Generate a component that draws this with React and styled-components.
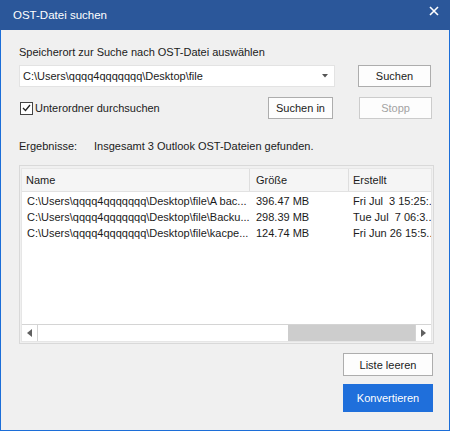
import React from "react";
import styled, { createGlobalStyle } from "styled-components";

const Global = createGlobalStyle`
  html, body { margin: 0; padding: 0; background: #f0f0f0; }
  * { box-sizing: border-box; }
  body { font-family: "Liberation Sans", Arial, sans-serif; font-size: 11px; color: #1b1b1b; }
`;

const Window = styled.div`
  width: 450px;
  height: 431px;
  display: flex;
  flex-direction: column;
  background: #f0f0f0;
  border: 1px solid #1c6ed8;
  border-top: none;
`;

const TitleBar = styled.div`
  height: 30px;
  margin: 0 -1px;
  background: #2b579a;
  color: #fff;
  display: flex;
  align-items: center;
  justify-content: space-between;
  padding: 0 12px 1px 13px;
  font-size: 11.5px;
`;

const CloseBtn = styled.div`
  width: 16px;
  height: 16px;
  display: flex;
  align-items: center;
  justify-content: center;
  margin-top: -7px;
  margin-right: -4px;
`;

const Body = styled.div`
  flex: 1;
  display: flex;
  flex-direction: column;
  padding: 0 17px 0 18px;
`;

const Label = styled.div`
  line-height: 16px;
  margin-top: ${(p) => p.$mt || 0}px;
  white-space: nowrap;
`;

const Row = styled.div`
  display: flex;
  align-items: center;
  height: 22px;
  margin-top: ${(p) => p.$mt || 0}px;
`;

const Combo = styled.div`
  width: 316px;
  height: 22px;
  background: #fff;
  border: 1px solid #e3e3e3;
  display: flex;
  align-items: center;
  justify-content: space-between;
  padding: 0 6px 0 3px;
`;

const Button = styled.button`
  font: inherit;
  font-size: 11px;
  width: ${(p) => p.$w}px;
  height: ${(p) => p.$h || 22}px;
  margin-left: ${(p) => p.$ml || 0}px;
  background: ${(p) => (p.$primary ? "#1f6fdb" : "#fdfdfd")};
  color: ${(p) => (p.$primary ? "#fff" : p.disabled ? "#a3a3a3" : "#1b1b1b")};
  border: 1px solid ${(p) => (p.$primary ? "#1f6fdb" : p.disabled ? "#cccccc" : "#adadad")};
  padding: 0;
  display: flex;
  align-items: center;
  justify-content: center;
`;

const CheckWrap = styled.label`
  display: flex;
  align-items: center;
  gap: 2px;
  flex: 1;
  margin-left: 1px;
`;

const Box = styled.span`
  width: 13px;
  height: 13px;
  border: 1px solid #444;
  background: #fff;
  display: flex;
  align-items: center;
  justify-content: center;
`;

const ResultRow = styled.div`
  display: flex;
  line-height: 16px;
  margin-top: 19px;
`;

const ResultKey = styled.span`
  width: 75px;
`;

const ListFrame = styled.div`
  margin-top: 11px;
  height: 179px;
  margin-right: -2px;
  border: 1px solid #d9d9d9;
  padding: 2px 1px 1px 1px;
  display: flex;
`;

const ListInner = styled.div`
  flex: 1;
  background: #fff;
  border: 1px solid #e6e6e6;
  display: flex;
  flex-direction: column;
  overflow: hidden;
`;

const Header = styled.div`
  height: 23px;
  display: flex;
  background: #f5f5f5;
  border-bottom: 1px solid #e2e2e2;
`;

const HeadCell = styled.div`
  width: ${(p) => p.$w}px;
  flex-shrink: 0;
  padding-left: ${(p) => p.$pl}px;
  display: flex;
  align-items: center;
  border-right: 1px solid #dedede;
`;

const Rows = styled.div`
  flex: 1;
  padding-top: 1px;
`;

const DataRow = styled.div`
  display: flex;
  height: 16px;
  align-items: center;
`;

const Cell = styled.div`
  width: ${(p) => p.$w}px;
  flex-shrink: 0;
  padding-left: ${(p) => p.$pl}px;
  white-space: pre;
`;

const HScroll = styled.div`
  height: 17px;
  display: flex;
  border-top: 1px solid #d4d4d4;
`;

const ArrowBox = styled.div`
  width: 16px;
  display: flex;
  align-items: center;
  justify-content: center;
  background: #fff;
  border-left: ${(p) => (p.$right ? "1px solid #d4d4d4" : "none")};
  border-right: ${(p) => (p.$right ? "none" : "1px solid #d4d4d4")};
`;

const Track = styled.div`
  flex: 1;
  display: flex;
  background: #fff;
`;

const Thumb = styled.div`
  width: 127px;
  margin-left: auto;
  background: #cdcdcd;
`;

const Footer = styled.div`
  display: flex;
  flex-direction: column;
  align-items: flex-end;
  margin-right: -1px;
  margin-top: 9px;
  gap: 8px;
`;

const rows = [
  ["C:\\Users\\qqqq4qqqqqqq\\Desktop\\file\\A bac...", "396.47 MB", "Fri Jul  3 15:25:.."],
  ["C:\\Users\\qqqq4qqqqqqq\\Desktop\\file\\Backu...", "298.39 MB", "Tue Jul  7 06:3.."],
  ["C:\\Users\\qqqq4qqqqqqq\\Desktop\\file\\kacpe...", "124.74 MB", "Fri Jun 26 15:5.."],
];

export default function App() {
  return (
    <>
      <Global />
      <Window>
        <TitleBar>
          <span>OST-Datei suchen</span>
          <CloseBtn>
            <svg width="10" height="10" viewBox="0 0 10 10">
              <path d="M1 1L9 9M9 1L1 9" stroke="#fff" strokeWidth="1.6" />
            </svg>
          </CloseBtn>
        </TitleBar>
        <Body>
          <Label $mt={14}>Speicherort zur Suche nach OST-Datei auswählen</Label>
          <Row $mt={5}>
            <Combo>
              <span>C:\Users\qqqq4qqqqqqq\Desktop\file</span>
              <svg width="6" height="4" viewBox="0 0 6 4">
                <path d="M0 0H6L3 3.5Z" fill="#555" />
              </svg>
            </Combo>
            <Button $w={73} $ml={23}>Suchen</Button>
          </Row>
          <Row $mt={10}>
            <CheckWrap>
              <Box>
                <svg width="9" height="8" viewBox="0 0 9 8">
                  <path d="M1 4L3.5 6.5L8 1" stroke="#222" strokeWidth="1.3" fill="none" />
                </svg>
              </Box>
              <span>Unterordner durchsuchen</span>
            </CheckWrap>
            <Button $w={65}>Suchen in</Button>
            <Button $w={73} $ml={26} disabled>Stopp</Button>
          </Row>
          <ResultRow>
            <ResultKey>Ergebnisse:</ResultKey>
            <span>Insgesamt 3 Outlook OST-Dateien gefunden.</span>
          </ResultRow>
          <ListFrame>
            <ListInner>
              <Header>
                <HeadCell $w={228} $pl={4}>Name</HeadCell>
                <HeadCell $w={99} $pl={6}>Größe</HeadCell>
                <HeadCell $w={90} $pl={4}>Erstellt</HeadCell>
              </Header>
              <Rows>
                {rows.map((r) => (
                  <DataRow key={r[0]}>
                    <Cell $w={228} $pl={5}>{r[0]}</Cell>
                    <Cell $w={99} $pl={6}>{r[1]}</Cell>
                    <Cell $w={82} $pl={4}>{r[2]}</Cell>
                  </DataRow>
                ))}
              </Rows>
              <HScroll>
                <ArrowBox>
                  <svg width="5" height="8" viewBox="0 0 5 8">
                    <path d="M5 0V8L0 4Z" fill="#606060" />
                  </svg>
                </ArrowBox>
                <Track>
                  <Thumb />
                </Track>
                <ArrowBox $right>
                  <svg width="5" height="8" viewBox="0 0 5 8">
                    <path d="M0 0V8L5 4Z" fill="#606060" />
                  </svg>
                </ArrowBox>
              </HScroll>
            </ListInner>
          </ListFrame>
          <Footer>
            <Button $w={90} $h={23}>Liste leeren</Button>
            <Button $w={90} $h={28} $primary>Konvertieren</Button>
          </Footer>
        </Body>
      </Window>
    </>
  );
}
